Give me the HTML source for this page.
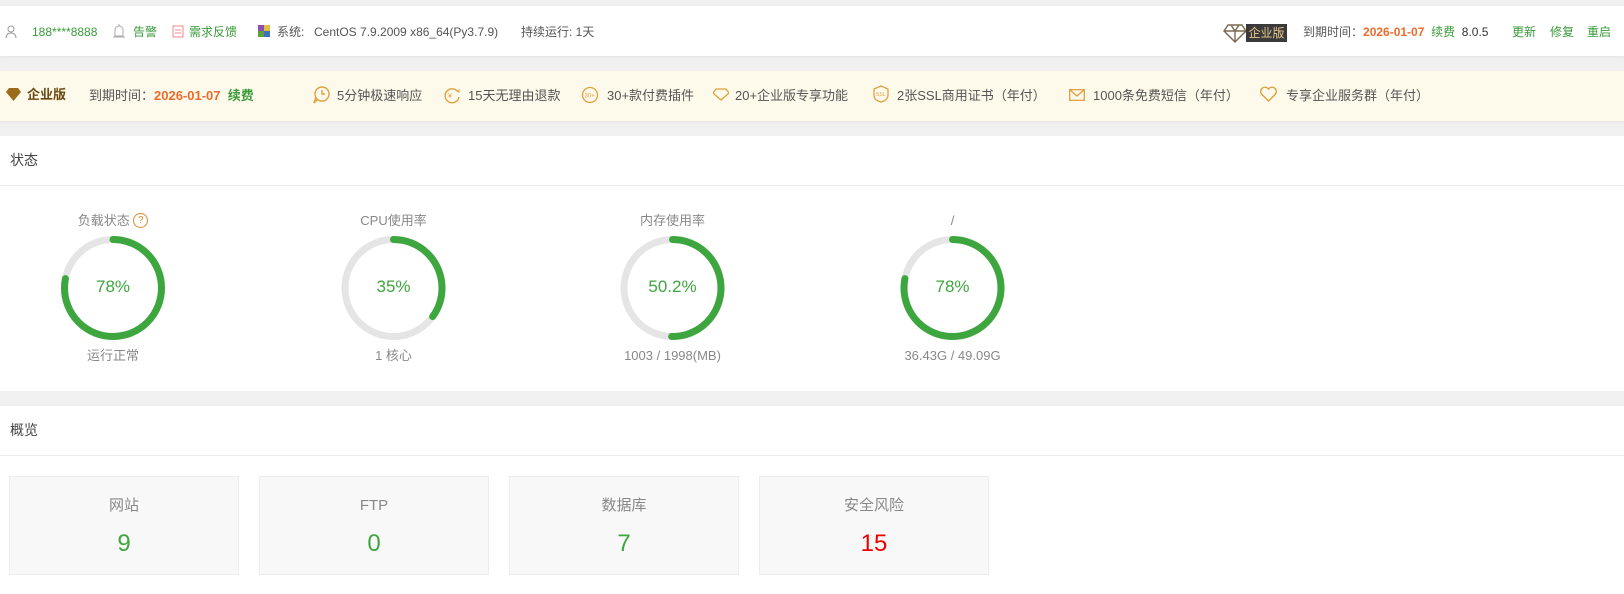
<!DOCTYPE html>
<html><head><meta charset="utf-8"><style>
*{margin:0;padding:0;box-sizing:border-box}
body{width:1624px;height:594px;background:#f0f0f0;font-family:"Liberation Sans","Noto Sans CJK SC",sans-serif;font-size:12px;line-height:16px;color:#555;position:relative;overflow:hidden}
.a{position:absolute;white-space:nowrap}
.g{color:#3a9a3a}.o{color:#ec6b2c;font-weight:bold}
.bar{position:absolute;left:0;width:1624px;background:#fff}
.card{position:absolute;top:476px;width:230px;height:99px;background:#f8f8f8;border:1px solid #ececec;text-align:center}
.card .l{position:absolute;top:19px;width:100%;font-size:15px;line-height:20px;color:#888}
.card .n{position:absolute;top:53px;width:100%;font-size:24px;line-height:28px;color:#3ea63e}
.gl{position:absolute;width:200px;text-align:center;font-size:13px;line-height:18px;color:#888}
.ci{font-size:13px}
</style></head><body>
<div class="bar" style="top:6px;height:50px;box-shadow:0 1px 2px #e3e3e3"></div>
<svg class="a" style="left:5px;top:25px" width="12" height="13" viewBox="0 0 12 13"><circle cx="6" cy="4" r="3" fill="none" stroke="#999"/><path d="M1 13c0-3 2-5 5-5s5 2 5 5" fill="none" stroke="#999"/></svg>
<div class="a g" style="left:32px;top:24px">188****8888</div>
<svg class="a" style="left:113px;top:24px" width="12" height="14"><path d="M2 12V6a4 4 0 018 0v6zM0 13h12M6 0v2" fill="none" stroke="#aaa"/></svg>
<div class="a g" style="left:133px;top:24px">告警</div>
<svg class="a" style="left:172px;top:24px" width="12" height="14"><rect x="1" y="2" width="10" height="11" fill="none" stroke="#e88"/><path d="M3 6h6M3 9h6" stroke="#e88"/></svg>
<div class="a g" style="left:189px;top:24px">需求反馈</div>
<svg class="a" style="left:258px;top:25px" width="12" height="12"><rect x="0" y="0" width="6" height="6" fill="#8a4fb0"/><rect x="6" y="0" width="6" height="6" fill="#e0c040"/><rect x="0" y="6" width="6" height="6" fill="#60a040"/><rect x="6" y="6" width="6" height="6" fill="#4070c0"/></svg>
<div class="a" style="left:277px;top:24px">系统:</div>
<div class="a" style="left:314px;top:24px">CentOS 7.9.2009 x86_64(Py3.7.9)</div>
<div class="a" style="left:521px;top:24px">持续运行: 1天</div>
<svg class="a" style="left:1223px;top:23px" width="24" height="20"><path d="M5 2h14l4 6-11 11L1 8z M1 8h22 M8 2l4 6 4-6 M12 19V8" fill="#fff" stroke="#7a6a50" stroke-width="1.4"/></svg>
<div class="a" style="left:1246px;top:24px;width:41px;height:18px;background:#3a3a3a;color:#e7c78a;text-align:center;line-height:18px">企业版</div>
<div class="a" style="left:1303px;top:24px">到期时间：<span class="o">2026-01-07</span>&nbsp;&nbsp;<span class="g">续费</span>&nbsp;&nbsp;<span style="color:#333">8.0.5</span></div>
<div class="a g" style="left:1512px;top:24px">更新</div>
<div class="a g" style="left:1550px;top:24px">修复</div>
<div class="a g" style="left:1587px;top:24px">重启</div>

<div class="bar" style="top:71px;height:50px;background:#fefaeb;box-shadow:0 1px 2px #e3e3e3"></div>
<svg class="a" style="left:6px;top:88px" width="15" height="13"><path d="M3 0h9l3 4-7.5 9L0 4z" fill="#9b6a1a"/></svg>
<div class="a" style="left:27px;top:87px;font-size:13px;font-weight:bold;color:#6b4a10">企业版</div>
<div class="a" style="left:89px;top:88px;font-size:13px">到期时间：<span class="o">2026-01-07</span>&nbsp;&nbsp;<span style="color:#3a9a3a;font-weight:bold">续费</span></div>
<svg class="a" style="left:312px;top:86px" width="18" height="18"><circle cx="10" cy="8" r="7" fill="none" stroke="#e0a040" stroke-width="1.4"/><path d="M10 4v4h3M4 11l-2 6 4-4" fill="none" stroke="#e0a040" stroke-width="1.4"/></svg><div class="a ci" style="left:337px;top:88px">5分钟极速响应</div>
<svg class="a" style="left:443px;top:86px" width="18" height="18"><path d="M15 6a7 7 0 10 1 5" fill="none" stroke="#e0a040" stroke-width="1.4"/><path d="M13 4l3 2 0-3" fill="none" stroke="#e0a040"/><text x="5" y="12" font-size="7" fill="#e0a040">¥</text></svg><div class="a ci" style="left:468px;top:88px">15天无理由退款</div>
<svg class="a" style="left:581px;top:86px" width="18" height="18"><circle cx="9" cy="9" r="7.5" fill="none" stroke="#e0a040" stroke-width="1.3"/><text x="3.5" y="11.5" font-size="6" fill="#e0a040">30+</text></svg><div class="a ci" style="left:607px;top:88px">30+款付费插件</div>
<svg class="a" style="left:713px;top:88px" width="16" height="13"><path d="M3 1h10l3 4-8 7-8-7z" fill="none" stroke="#e0a040" stroke-width="1.3"/></svg><div class="a ci" style="left:735px;top:88px">20+企业版专享功能</div>
<svg class="a" style="left:873px;top:85px" width="16" height="18"><path d="M8 1l7 3v6c0 4-3 6-7 7-4-1-7-3-7-7V4z" fill="none" stroke="#e0a040" stroke-width="1.3"/><text x="3" y="11" font-size="5" fill="#e0a040">SSL</text></svg><div class="a ci" style="left:897px;top:88px">2张SSL商用证书（年付）</div>
<svg class="a" style="left:1069px;top:89px" width="16" height="12"><rect x=".7" y=".7" width="14.6" height="10.6" fill="none" stroke="#e0a040" stroke-width="1.3"/><path d="M1 1l7 6 7-6" fill="none" stroke="#e0a040" stroke-width="1.3"/></svg><div class="a ci" style="left:1093px;top:88px">1000条免费短信（年付）</div>
<svg class="a" style="left:1260px;top:86px" width="17" height="16"><path d="M8.5 15L1.5 8a4 4 0 017-5 4 4 0 017 5z" fill="none" stroke="#e0a040" stroke-width="1.4"/></svg><div class="a ci" style="left:1286px;top:88px">专享企业服务群（年付）</div>

<div class="bar" style="top:136px;height:255px"></div>
<div class="a" style="left:10px;top:152px;font-size:14px;color:#444">状态</div>
<div class="a" style="left:0;top:185px;width:1624px;height:1px;background:#ececec"></div>
<svg class="a" style="left:0;top:230px" width="1624" height="120">
<g fill="none" stroke-width="7" stroke-linecap="round">
<circle cx="113" cy="58" r="48.5" stroke="#e5e5e5"/><circle cx="393.5" cy="58" r="48.5" stroke="#e5e5e5"/><circle cx="672.5" cy="58" r="48.5" stroke="#e5e5e5"/><circle cx="952.5" cy="58" r="48.5" stroke="#e5e5e5"/>
<circle cx="113" cy="58" r="48.5" stroke="#3ea63e" stroke-dasharray="237.6 400" transform="rotate(-90 113 58)"/>
<circle cx="393.5" cy="58" r="48.5" stroke="#3ea63e" stroke-dasharray="106.6 400" transform="rotate(-90 393.5 58)"/>
<circle cx="672.5" cy="58" r="48.5" stroke="#3ea63e" stroke-dasharray="153 400" transform="rotate(-90 672.5 58)"/>
<circle cx="952.5" cy="58" r="48.5" stroke="#3ea63e" stroke-dasharray="237.6 400" transform="rotate(-90 952.5 58)"/>
</g></svg>
<div class="gl" style="left:13px;top:212px">负载状态 <span style="display:inline-block;width:15px;height:15px;border:1.3px solid #e08a30;border-radius:50%;color:#e08a30;font-size:10px;line-height:13px;vertical-align:top;margin-top:1px">?</span></div>
<div class="gl" style="left:293.5px;top:212px">CPU使用率</div>
<div class="gl" style="left:572.5px;top:212px">内存使用率</div>
<div class="gl" style="left:852.5px;top:212px">/</div>
<div class="gl" style="left:13px;top:277px;font-size:17px;line-height:20px;color:#3ea63e">78%</div>
<div class="gl" style="left:293.5px;top:277px;font-size:17px;line-height:20px;color:#3ea63e">35%</div>
<div class="gl" style="left:572.5px;top:277px;font-size:17px;line-height:20px;color:#3ea63e">50.2%</div>
<div class="gl" style="left:852.5px;top:277px;font-size:17px;line-height:20px;color:#3ea63e">78%</div>
<div class="gl" style="left:13px;top:347px">运行正常</div>
<div class="gl" style="left:293.5px;top:347px">1 核心</div>
<div class="gl" style="left:572.5px;top:347px">1003 / 1998(MB)</div>
<div class="gl" style="left:852.5px;top:347px">36.43G / 49.09G</div>

<div class="bar" style="top:406px;height:188px"></div>
<div class="a" style="left:10px;top:422px;font-size:14px;color:#444">概览</div>
<div class="a" style="left:0;top:455px;width:1624px;height:1px;background:#ececec"></div>
<div class="card" style="left:9px"><div class="l">网站</div><div class="n">9</div></div>
<div class="card" style="left:259px"><div class="l">FTP</div><div class="n">0</div></div>
<div class="card" style="left:509px"><div class="l">数据库</div><div class="n">7</div></div>
<div class="card" style="left:759px"><div class="l">安全风险</div><div class="n" style="color:#e00">15</div></div>
</body></html>
